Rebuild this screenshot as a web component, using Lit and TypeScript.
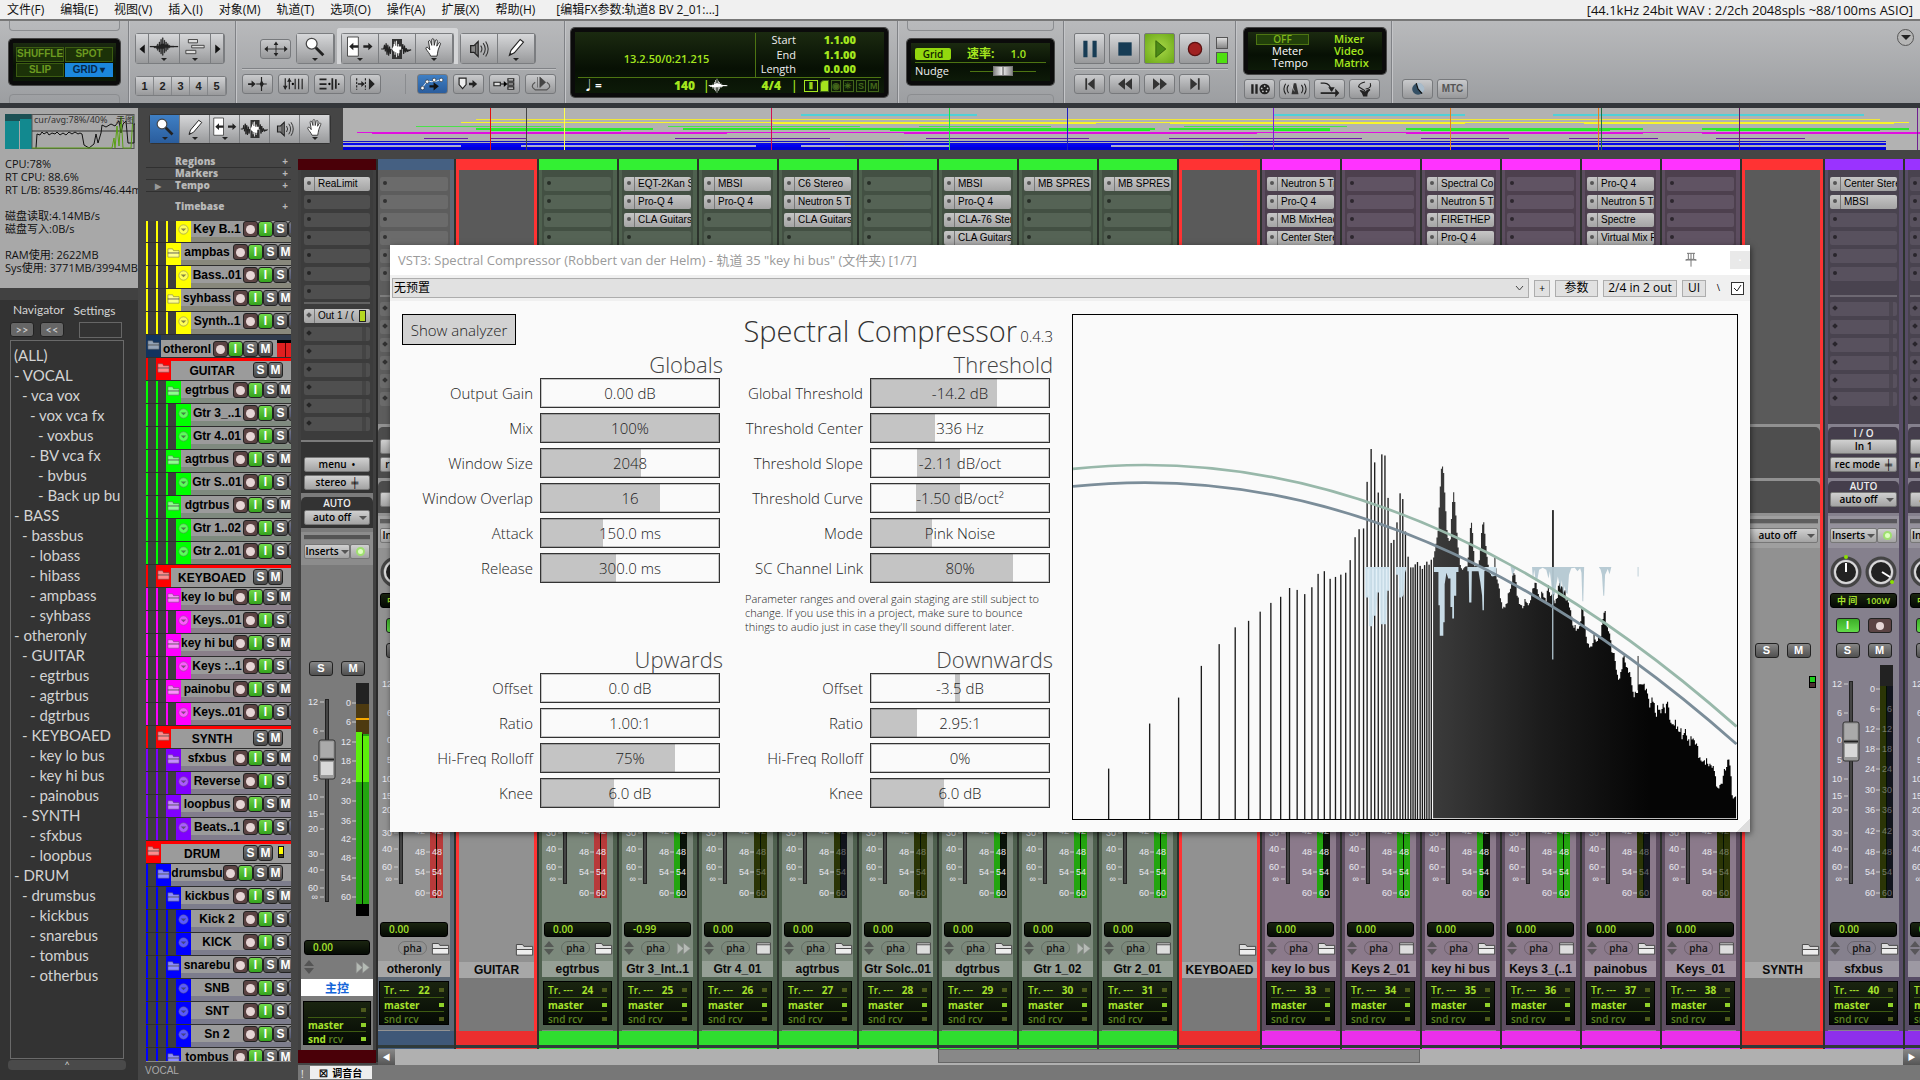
import { LitElement, html, css, svg, nothing } from "lit";
import { customElement, property } from "lit/decorators.js";
import { classMap } from "lit/directives/class-map.js";
import { styleMap } from "lit/directives/style-map.js";

/* ---------- icons ---------- */

const wavePath =
  "M0 11.500h3v-1h1v-2h1v2h1V6h1v3h1V3h1v5h1V1h1v7h1V4h1v5h1V6h1v3h1V8h1v2h2v1h5v1h-5v1h-2v2h-1v-2h-1v4h-1v-4h-1v6h-1v-5h-1v8h-1v-8h-1v6H8v-6H7v4H6v-4H5v2H4v-2H3v-1H0z";
const handPath =
  "M8 23c-1-3-4-6-5.500-8.500C1.500 12.500 3.500 11.500 5 13l2 2.500L5.500 6C5 4 7.300 3.500 7.900 5.400L9.300 10V3.500c0-2 2.500-2 2.600 0L12.300 10l1.200-5.500c.5-1.900 2.800-1.300 2.500.6L15.400 11l2-3.500c1-1.600 2.900-.6 2.300 1L17 15.500c-.7 2.500-.8 5.500-1.400 7.500z";

const icons: Record<string, unknown> = {
  zoom: svg`<circle cx="8" cy="8" r="6.500" fill="#fff" stroke="#444" stroke-width="1.500"/><path d="M13 13l9 9" stroke="#222" stroke-width="3.500"/>`,
  pencil: svg`<path d="M4 22l2-6L17 3l4 3L10 19z" fill="#fff" stroke="#222" stroke-width="1.300"/><path d="M4 22l1-3 2 1.500z" fill="#222"/>`,
  trim: svg`<path d="M-3 0h13v23H-3z" fill="#fff" stroke="#333"/><path d="M-1 11.500l5-4.500v3h6v3H4v3z" fill="#222"/><path d="M27 11.500L22 7v3h-6v3h6v3z" fill="#222"/>`,
  wave: svg`<path d="M6 0h12v24H6z" fill="#333"/><path d="M-7 12h3l1-5 1 8 1-10 1 14 1-12 1 13 1-11 1 9 1-6M18 12l1-6 1 12 1-10 1 8 1-5 1 4 5-2" fill="#222" stroke="#222" stroke-width="1.300"/><path d="M6 12l2-4V6h1V3h1v5h1V2h1v7h1V6h1v3h3v4h-2v4h-1v3h-1v-3h-1v5h-1v-6h-1v3H9v-4H8z" fill="#fff"/>`,
  waveform: svg`<path d="${wavePath}" fill="#222" stroke="#222" stroke-width=".5"/><path d="M-5 11.500h34" stroke="#222" stroke-width="1.500"/>`,
  waveLight: svg`<path d="${wavePath}" fill="#fff"/><path d="M-2 11.500h28" stroke="#fff" stroke-width="1.500"/>`,
  hand: svg`<path d="${handPath}" fill="#fff" stroke="#333" stroke-width="1.200"/>`,
  speaker: svg`<path d="M2 8h4l5-5v18l-5-5H2z" fill="#888" stroke="#222" stroke-width="1.500"/><path d="M8 6v12M14 8q3 4 0 8M17 5q5 7 0 14M20 3q6 9 0 18" fill="none" stroke="#333" stroke-width="1.300"/>`,
  tracks: svg`<path d="M4 3h11v4H4zM8 10h15v3H8zM1 16h12v4H1z" fill="#ddd" stroke="#333"/>`,
  left: svg`<path d="M18 0v24L4 12z" fill="#111"/>`,
  right: svg`<path d="M6 0v24l14-12z" fill="#111"/>`,
  move: svg`<path d="M-5 12h34M12 3v18" stroke="#222" stroke-width="1.500"/><path d="M-8 12l6-5v10zM32 12l-6-5v10zM12-1l4 6H8zM12 25l4-6H8z" fill="#222"/>`,
  nudge: svg`<path d="M-5 10.500h6V6l7 6-7 6v-4.500h-6z" fill="#222"/><path d="M18 0v24M9 12h18" stroke="#222" stroke-width="2"/><path d="M18 5l4 7-4 7-3-7z" fill="#222"/>`,
  updown: svg`<path d="M-3 2v19M4 2v19M14 3v18M26 3v18M20 3v18" stroke="#222" stroke-width="2"/><path d="M-7 15l4 7 4-7zM0 8l4-6 4 6z" fill="#222"/><circle cx="10" cy="12" r="2"/>`,
  lines: svg`<path d="M-6 4H6M-6 12H6M-6 20H6M16 2v20M22 4v16" stroke="#222" stroke-width="3"/><circle cx="11" cy="12" r="2"/><circle cx="27" cy="12" r="1.500"/>`,
  tabto: svg`<path d="M-4 2v20M11 2v20" stroke="#222" stroke-width="2" stroke-dasharray="4 2"/><path d="M-2 12h7" stroke="#222" stroke-width="2.500"/><path d="M4 7l6 5-6 5zM17 2v20l10-10z" fill="#222"/>`,
  envelope: svg`<path d="M-6 18L2 7l8 1 8-1 8-3" fill="none" stroke="#fff" stroke-width="1.500"/><path d="M6 14h7v-5l9 7-9 7v-5H6z" fill="#111"/><g fill="#fff" stroke="#222"><circle cx="-6" cy="19" r="3"/><circle cx="2" cy="8" r="3"/><circle cx="14" cy="5" r="3"/><circle cx="26" cy="5" r="3"/></g>`,
  marker: svg`<path d="M-5 2H7v11l-6 7-6-7z" fill="#eee" stroke="#222" stroke-width="2"/><path d="M12 10h6V5l8 7-8 7v-5h-6z" fill="#222"/>`,
  boxes: svg`<path d="M-7 9H4v6H-7zM17 3h10v4H17zM17 10h10v4H17zM17 17h10v4H17z" fill="#ddd" stroke="#222" stroke-width="2"/><path d="M5 12h6" stroke="#222" stroke-width="2"/><path d="M10 7l6 5-6 5z"/>`,
  loop: svg`<path d="M2 9q-10 7 0 13h20q10-6 0-13" fill="none" stroke="#555" stroke-width="2"/><path d="M6 0v18M10 0l10 9-10 9z" fill="#444" stroke="#444"/>`,
  pause: svg`<path d="M4 2h5v20H4zM15 2h5v20h-5z" fill="#173c55"/>`,
  stop: svg`<path d="M4 4h16v16H4z" fill="#173c55"/>`,
  play: svg`<path d="M7 2v20l12-10z" fill="#4c8a17" stroke="#2d5c08"/>`,
  record: svg`<circle cx="12" cy="12" r="8" fill="#a02222" stroke="#5b1212" stroke-width="1.500"/>`,
  start: svg`<path d="M4 2h3v20H4zM20 2v20L8 12z" fill="#333"/>`,
  rewind: svg`<path d="M12 2v20L0 12zM24 2v20L12 12z" fill="#333"/>`,
  forward: svg`<path d="M0 2v20l12-10zM12 2v20l12-10z" fill="#333"/>`,
  end: svg`<path d="M17 2h3v20h-3zM4 2v20l12-10z" fill="#333"/>`,
  midi: svg`<path d="M-3 4h4v16h-4zM4 4h4v16H4z" fill="#222"/><circle cx="20" cy="12" r="9" fill="#222"/><g fill="#ccc"><circle cx="15" cy="11" r="1.500"/><circle cx="20" cy="7" r="1.500"/><circle cx="25" cy="11" r="1.500"/><circle cx="17" cy="16" r="1.500"/><circle cx="23" cy="16" r="1.500"/></g>`,
  metro: svg`<path d="M10 2h4l4 19H6z" fill="#333"/><path d="M11 16L6 5" stroke="#ddd"/><path d="M1 5q-5 7 0 14M-4 3q-6 9 0 18M23 5q5 7 0 14M28 3q6 9 0 18" fill="none" stroke="#222" stroke-width="1.800"/>`,
  merge: svg`<path d="M-4 2h6q10 0 12 13" fill="none" stroke="#222" stroke-width="2"/><path d="M-4 19h27" stroke="#222" stroke-width="3"/><path d="M21 11l7 8-7 7zM9 9h11l-5 8z" fill="#222"/>`,
  wheat: svg`<path d="M9 25q-1-6-6-10c0-3 6 0 7 1h3c4-5 8-5 8-2-4 3-5 6-5 11z" fill="#222"/><path d="M12 15L1 8q1-6 11-8M13 12q11-1 8-10" fill="none" stroke="#222" stroke-width="1.800"/>`,
  clock: svg`<circle cx="12" cy="12" r="10" fill="#345065"/><path d="M12 12L9 2a10 10 0 0 1 10 17z" fill="#a9bccb"/><path d="M9 2l3 10 7 8" stroke="#111" fill="none" stroke-width="2"/>`,
  folder: svg`<path d="M-1 4h10l2 3h14v6H-1z" fill="#ddd" stroke="#444" stroke-width="1.500"/><path d="M-1 12h26v9H-1z" fill="#eee" stroke="#444" stroke-width="1.500"/>`,
  ff: svg`<path d="M2 3v18l10-9zM12 3v18l11-9z" fill="#b4bab4" stroke="#888"/>`,
  window: svg`<path d="M1 3h22v18H1z" fill="#ddd" stroke="#444" stroke-width="1.500"/><path d="M1 6h22" stroke="#444" stroke-width="1.500"/>`,
  pin: svg`<path d="M6 2h12M8 2v9h8V2M12 2v9M4 12h16M12 12v10M8 11l-4 1M16 11l4 1" fill="none" stroke="#777" stroke-width="1.500"/>`,
};

const icon = (name: string, cls = "") =>
  html`<svg class="icon ${cls}" viewBox="0 0 24 24" aria-hidden="true">${icons[name]}</svg>`;

const baseStyles = css`
  * { box-sizing: border-box; }
  button, input, select { font: inherit; color: inherit; margin: 0; padding: 0; border: 0; background: none; border-radius: 0; }
  button { display: flex; align-items: center; justify-content: center; white-space: nowrap; }
  .icon { width: 18px; height: 18px; overflow: visible; flex: none; display: block; }
  .row { display: flex; }
  .ghost { position: absolute; inset: 0; width: 100%; height: 100%; opacity: 0; }
  ul { list-style: none; margin: 0; padding: 0; }
`;

/* ---------- track list ---------- */

interface Track { name: string; level: number; color: string; tint?: string; kind: "folder" | "item" | "group"; }

const t = (name: string, level: number, color: string, tint: string, kind: Track["kind"] = "item"): Track =>
  ({ name, level, color, tint, kind });

const Y = "#ffff00", G = "#00ff00", M = "#ff00ff", P = "#8000ff", B = "#0000ff", R = "#ff0000", N = "#12335e";
const tracks: Track[] = [
  t("Key B..1", 3, Y, "#88887c"),
  t("ampbas", 2, Y, "#88887c", "folder"),
  t("Bass..01", 3, Y, "#88887c"),
  t("syhbass", 2, Y, "#88887c", "folder"),
  t("Synth..1", 3, Y, "#88887c"),
  t("otheronl", 0, N, "#999999", "folder"),
  t("GUITAR", 1, R, "#999999", "group"),
  t("egtrbus", 2, G, "#7f8a7f", "folder"),
  t("Gtr 3_..1", 3, G, "#7f8a7f"),
  t("Gtr 4..01", 3, G, "#7f8a7f"),
  t("agtrbus", 2, G, "#7f8a7f", "folder"),
  t("Gtr S..01", 3, G, "#7f8a7f"),
  t("dgtrbus", 2, G, "#7f8a7f", "folder"),
  t("Gtr 1..02", 3, G, "#7f8a7f"),
  t("Gtr 2..01", 3, G, "#7f8a7f"),
  t("KEYBOAED", 1, R, "#999999", "group"),
  t("key lo bu", 2, M, "#8a7f8a", "folder"),
  t("Keys..01", 3, M, "#8a7f8a"),
  t("key hi bu", 2, M, "#8a7f8a", "folder"),
  t("Keys :..1", 3, M, "#8a7f8a"),
  t("painobu", 2, M, "#8a7f8a", "folder"),
  t("Keys..01", 3, M, "#8a7f8a"),
  t("SYNTH", 1, R, "#999999", "group"),
  t("sfxbus", 2, P, "#827d8c", "folder"),
  t("Reverse", 3, P, "#827d8c"),
  t("loopbus", 2, P, "#827d8c", "folder"),
  t("Beats..1", 3, P, "#827d8c"),
  t("DRUM", 0, R, "#999999", "group"),
  t("drumsbu", 1, B, "#7d7d8c", "folder"),
  t("kickbus", 2, B, "#7d7d8c", "folder"),
  t("Kick 2", 3, B, "#7d7d8c"),
  t("KICK", 3, B, "#7d7d8c"),
  t("snarebu", 2, B, "#7d7d8c", "folder"),
  t("SNB", 3, B, "#7d7d8c"),
  t("SNT", 3, B, "#7d7d8c"),
  t("Sn 2", 3, B, "#7d7d8c"),
  t("tombus", 2, B, "#7d7d8c", "folder"),
];

@customElement("track-row")
class TrackRow extends LitElement {
  @property({ attribute: false }) track!: Track;
  static styles = [baseStyles, css`
    :host { display: block; height: 23px; font: 700 12px/18px "Liberation Sans", Arial, sans-serif; }
    .track { display: flex; height: 23px; align-items: stretch; border-top: 1px solid #2e2e2e; overflow: hidden; }
    .guide { flex: none; width: 10px; border-left: 2px solid; }
    .swatch { flex: none; width: 15px; display: flex; justify-content: center; padding-top: 3px; }
    .swatch svg { width: 13px; height: 13px; }
    .name { flex: none; width: 52px; text-align: center; overflow: hidden; white-space: nowrap; color: #000; background: #9b9b9b; }
    .body { display: flex; flex: 1; border-bottom: 5px solid; background: #9b9b9b; }
    .group .name { width: 82px; line-height: 21px; }
    .group .body { border-bottom: 0; border-top: 3px solid #f00; }
    .root .body { border-bottom: 0; border-top: 5px solid #2f3b4c; }
    .btn { flex: none; width: 15px; height: 16px; margin-top: 1px; border: 1px solid #222; border-radius: 3px; color: #fff; background: linear-gradient(#777, #4a4a4a); font-size: 12px; }
    .btn.arm { background: #5b4343; }
    .btn.arm::before { content: ""; width: 9px; height: 9px; border-radius: 50%; background: #e6d5d5; }
    .btn.mon { background: linear-gradient(#6fd84a, #35a31e); }
    .meter { margin: 0 0 0 4px; width: 14px; border-top: 3px solid #000; background: linear-gradient(90deg, #e02020 8px, #500 8px 9px, #e02020 9px); }
    .level { margin: 2px 0 0 5px; width: 6px; height: 12px; border: 1px solid #111; background: linear-gradient(#ffff00 7px, #222 7px 8px, #443c10 8px); }
  `];
  render() {
    const k = this.track;
    const group = k.kind === "group";
    const root = k.level === 0 && !group;
    const guide = k.level === 1 && k.color !== B ? R : k.color;
    return html`<div class=${classMap({ track: true, group, root })}>
      ${Array.from({ length: k.level }, () => html`<span class="guide" style=${styleMap({ borderColor: guide })}></span>`)}
      <span class="swatch" style=${styleMap({ background: k.color })}>
        <svg viewBox="0 0 14 14" aria-hidden="true">${k.kind === "item"
          ? svg`<circle cx="7" cy="7" r="5" fill="#fff" fill-opacity=".35" stroke="#666" stroke-opacity=".5"/><path d="M4 6h6l-3 3z" fill="#333" fill-opacity=".6"/>`
          : svg`<path d="M1 3h5l1 2h6v3H1zM1 7h12v5H1z" fill="#fff" fill-opacity=".55" stroke="#555" stroke-opacity=".5"/>`}</svg>
      </span>
      <div class="body" style=${styleMap(group || root ? {} : { borderColor: k.tint! })}>
        <span class="name">${k.name}</span>
        ${group ? nothing : html`<button class="btn arm" aria-label="Record arm"></button><button class="btn mon">I</button>`}
        <button class="btn">S</button><button class="btn">M</button>
        ${root ? html`<span class="meter"></span>` : nothing}
        ${group && k.level === 0 ? html`<span class="level"></span>` : nothing}
      </div>
    </div>`;
  }
}

/* ---------- mixer ---------- */

interface Strip {
  name: string; num?: number; theme: string; kind: "track" | "folder" | "plain";
  fx?: string[]; vol?: string; meter?: string; foot?: string;
}
const s = (name: string, num: number, theme: string, foot: string, meter: string, fx: string[] = [], vol = "0.00"): Strip =>
  ({ name, num, theme, foot, meter, fx, vol, kind: "track" });
const f = (name: string): Strip => ({ name, theme: "red", kind: "folder" });

const strips: Strip[] = [
  { ...s("otheronly", 22, "steel", "folder", "red"), kind: "plain" },
  f("GUITAR"),
  s("egtrbus", 24, "green", "folder", "red"),
  s("Gtr 3_Int..1", 25, "green", "ff", "half", ["EQT-2Kan S", "Pro-Q 4", "CLA Guitars"], "-0.99"),
  s("Gtr 4_01", 26, "green", "window", "idle", ["MBSI", "Pro-Q 4"]),
  s("agtrbus", 27, "green", "folder", "idlehalf", ["C6 Stereo", "Neutron 5 Tr", "CLA Guitars"]),
  s("Gtr Solc..01", 28, "green", "window", "idle"),
  s("dgtrbus", 29, "green", "folder", "half", ["MBSI", "Pro-Q 4", "CLA-76 Ster", "CLA Guitars"]),
  s("Gtr 1_02", 30, "green", "ff", "full", ["MB SPRES"]),
  s("Gtr 2_01", 31, "green", "window", "full", ["MB SPRES"]),
  f("KEYBOAED"),
  s("key lo bus", 33, "magenta", "folder", "half", ["Neutron 5 Tr", "Pro-Q 4", "MB MixHead", "Center Stere"]),
  s("Keys 2_01", 34, "magenta", "window", "full"),
  s("key hi bus", 35, "magenta", "folder", "half", ["Spectral Co", "Neutron 5 Tr", "FIRETHEP", "Pro-Q 4"]),
  s("Keys 3_(..1", 36, "magenta", "window", "full"),
  s("painobus", 37, "magenta", "folder", "idlehalf", ["Pro-Q 4", "Neutron 5 Tr", "Spectre", "Virtual Mix R"]),
  s("Keys_01", 38, "magenta", "window", "idle"),
  f("SYNTH"),
  s("sfxbus", 40, "violet", "folder", "idlehalf", ["Center Stere", "MBSI"]),
  s("Reverse", 41, "violet", "window", "idle"),
];

type Marks = readonly (readonly [string, number])[];
const channelScale: Marks = [["12", 22], ["6", 51], ["0", 78], ["5", 98], ["10", 117], ["15", 134], ["20", 148], ["30", 171], ["40", 187], ["60", 205], ["∞", 217]];
const channelDb: Marks = [["0", 27], ["6", 47], ["12", 67], ["18", 87], ["24", 107], ["30", 128], ["36", 148], ["42", 169], ["48", 190], ["54", 210], ["60", 231]];
const masterScale: Marks = [["12", 22], ["6", 51], ["0", 78], ["5", 98], ["10", 117], ["15", 134], ["20", 149], ["30", 174], ["40", 190], ["60", 208], ["∞", 217]];
const masterDb: Marks = [["0", 23], ["6", 42], ["12", 62], ["18", 81], ["24", 101], ["30", 121], ["36", 141], ["42", 159], ["48", 178], ["54", 198], ["60", 217]];

const mixStyles = css`
  .band { height: 11px; background: var(--hue); flex: none; }
  .slots { display: flex; flex-direction: column; gap: 4px; }
  .slot { height: 14px; border-radius: 2px; background: var(--slot); display: flex; align-items: center; justify-content: flex-start; font: 10px/14px "Liberation Sans", Arial, sans-serif; color: #000; overflow: hidden; }
  .slot::before { content: ""; flex: none; width: 4px; height: 4px; margin: 0 3px 3px 3px; border-radius: 50%; background: #0008; }
  .slot.on { background: linear-gradient(#c6c6c6, #a4a4a4); }
  .slot.on span { border-left: 1px solid #777; padding-left: 3px; }
  .slot.send::before { border-radius: 0; transform: rotate(45deg); }
  .slot.send::after { content: ""; width: 4px; height: 14px; margin: 0 4px 0 auto; background: #0002; }
  .slot.send.on::after { width: 5px; height: 10px; border: 1px solid #222; background: #b6d820; }
  .chip { width: 100%; height: 15px; border: 1px solid #777; border-radius: 2px; background: linear-gradient(#d0d0d0, #a3a3a3); color: #000; font: 600 10px/13px "Open Sans", sans-serif; }
  .chip i { margin-left: auto; border: 4px solid transparent; border-top-color: #555; border-bottom: 0; margin-right: 2px; }
  .chip.drop span { margin-left: auto; }
  .caption { text-align: center; color: #eee; font: 600 10px/12px "Open Sans", sans-serif; }
  .panel { background: var(--dark); border-radius: 5px 5px 0 0; }
  .ins { background: #fff2; }
  .insbar { height: 5px; background: #0006; margin-bottom: 4px; border-bottom: 1px solid #fff4; }
  .inschip { display: flex; }
  .inschip .chip:first-child { flex: 1; gap: 2px; }
  .inschip .chip:last-child { width: 20px; }
  .inschip .chip:first-child i { margin: 0; }
  .lamp { width: 9px; height: 9px; border-radius: 50%; border: 2px solid #9fe070; background: #dfffc0; }
  .pair { display: flex; justify-content: center; gap: 8px; }
  .key { width: 24px; height: 15px; border: 1px solid #222; border-radius: 3px; background: linear-gradient(#868686, #505050); color: #fff; font: 700 11px/13px "Liberation Sans", Arial, sans-serif; }
  .key.green { background: linear-gradient(#3cae28, #62dc49); }
  .key.rec { background: #5b4343; }
  .key.rec::before { content: ""; width: 8px; height: 8px; border-radius: 50%; background: #e6d5d5; }
  .fader { position: relative; height: 240px; width: 70px; }
  .fader svg { display: block; width: 70px; height: 240px; }
  .fader text { font: 9px "Liberation Sans", Arial, sans-serif; fill: #e8e8f0; text-anchor: end; }
  .lcd { background: linear-gradient(#1a2410, #050a04); border: 1px solid #000; border-radius: 3px; color: #a6e22c; font: 600 10px/13px "Open Sans", sans-serif; }
  .vol { height: 15px; padding: 0 8px; text-align: left; }
  .feet { display: flex; height: 18px; align-items: center; justify-content: flex-end; gap: 6px; }
  .feet .icon { width: 15px; height: 15px; }
  .updown { width: 10px; height: 14px; margin-right: auto; }
  .phase { width: 29px; height: 14px; border: 1px solid #0003; border-radius: 7px; color: #111; font: 600 10px/12px "Open Sans", sans-serif; }
  .route { height: 44px; padding: 1px 4px; border-radius: 0; font-size: 10px; line-height: 14px; }
  .route div { display: flex; justify-content: space-between; align-items: center; height: 14px; white-space: nowrap; }
  .route div + div { border-top: 1px solid #3e5b12; }
  .route b { font-weight: 700; }
  .route u { width: 5px; height: 4px; background: #4d5a1c; }
  .route u.lit { background: #8fd12a; }
  .route .dim { color: #5d8522; }
`;

const faderView = (left: Marks, right: Marks, meter: string, master = false) => {
  const fills: Record<string, string[]> = {
    red: ["#b83a3a", "#b83a3a"], half: ["#23a50f", "#0a120a"], full: ["#23a50f", "#23a50f"],
    idle: ["#2b3506", "#2b3506"], idlehalf: ["#2b3506", "#11141c"],
  };
  const [a, b] = fills[meter] ?? fills.full;
  return html`<div class="fader"><svg viewBox="0 0 70 240" aria-hidden="true">
    ${left.map(([v, y]) => svg`<text x="13" y=${y + 3}>${v}</text><path d="M15 ${y}h4" stroke="#ccc" stroke-width="1"/>`)}
    <rect x="20" y="19" width="4" height="203" fill="#222"/><path d="M22 20v201" stroke="#666"/>
    <rect x="51" y="3" width="13" height="21" fill="#222"/>
    <rect x="51" y="24" width="6" height="212" fill=${a}/><rect x="58" y="24" width="6" height="212" fill=${b}/>
    <path d="M57.500 24V236" stroke="#031003"/>
    ${master ? svg`<rect x="51" y="24" width="13" height="30" fill="#4d3a10"/><path d="M51 39h13" stroke="#f5a800" stroke-width="2"/><rect x="51" y="52" width="6" height="50" fill="#5cf00a"/><rect x="58" y="56" width="6" height="46" fill="#5cf00a"/><rect x="51" y="224" width="13" height="12" fill="#000"/>` : nothing}
    ${right.map(([v, y]) => svg`<text x="46" y=${y + 3}>${v}</text><path d="M47 ${y}h4" stroke="#ccc"/>`)}
    ${master ? nothing : right.slice(1).map(([v, y]) => svg`<text x="63" y=${y + 3} fill-opacity=${meter.startsWith("idle") ? 0.4 : 1}>${v}</text>`)}
    <g><rect x="14" y="60" width="16" height="39" rx="2" fill="#9a9a9a" stroke="#333"/><rect x="16" y="62" width="12" height="15" fill="#aaa"/><rect x="16" y="82" width="12" height="13" fill="#d8d8d8"/><path d="M15 79.500h14" stroke="#222" stroke-width="2"/></g>
  </svg><input class="ghost" type="range" aria-label="Volume"></div>`;
};

const upDown = svg`<path d="M5 0l5 6H0zM5 14l5-6H0z" fill="#444" fill-opacity=".7"/>`;

@customElement("channel-strip")
class ChannelStrip extends LitElement {
  @property({ attribute: false }) strip!: Strip;
  static styles = [baseStyles, mixStyles, css`
    :host { display: block; flex: none; width: 80px; }
    .strip { height: 100%; display: flex; flex-direction: column; border-right: 2px solid #2c322c; background: var(--edge); }
    .green { --hue: #33f033; --dark: #465446; --slot: #556355; --low: #7c897c; --edge: #4f614f; --fxbg: #435043; }
    .magenta { --hue: #ff33ff; --dark: #4f4250; --slot: #605363; --low: #8b7a8b; --edge: #5d4d60; --fxbg: #4d404e; }
    .violet { --hue: #9a33ff; --dark: #453e4c; --slot: #58515e; --low: #85808d; --edge: #574c66; --fxbg: #49434f; }
    .steel { --hue: #456082; --dark: #4c4c4c; --slot: #6b6b6b; --low: #929292; --edge: #5d6875; --fxbg: #5d5d5d; }
    .red { --hue: #ff3333; --dark: #4e4e4e; --slot: #5a5a5a; --low: #919191; --edge: #ff3333; --fxbg: #5a5a5a; }
    .core { display: flex; flex-direction: column; margin: 0 4px 0 3px; background: var(--low); flex: 1; }
    .plain .core { margin: 0 4px 0 0; }
    .folder .core { margin: 0 3px; }
    .fxs { background: var(--fxbg); padding: 7px 2px 0; height: 254px; }
    .fxs .split { border-top: 2px solid #fff3; margin: 14px 0 5px; }
    .io { margin-top: 3px; height: 51px; padding: 0 2px; }
    .io .chip { margin-bottom: 3px; }
    .auto { margin-top: 3px; height: 32px; padding: 0 2px; }
    .auto .caption { line-height: 11px; }
    .ins { margin-top: 3px; height: 32px; padding: 3px 2px 0; }
    .knobs { display: flex; justify-content: space-around; margin-top: 6px; height: 36px; }
    .knobs svg { width: 32px; height: 34px; }
    .pan { display: flex; justify-content: space-between; margin: 3px 2px 0; padding: 0 6px; height: 15px; font-family: "Open Sans", "Noto Sans CJK SC", sans-serif; font-size: 9px; }
    .mid { margin-top: 10px; height: 15px; }
    .sm { margin-top: 10px; }
    .fader { margin: 4px 0 0 1px; }
    .vol { margin: 20px 2px 0; }
    .feet { padding: 0 2px; margin: 2px 0 4px; }
    .name { height: 16px; text-align: center; background: #fff3; color: #0a0a0a; font: 700 12px/16px "Liberation Sans", Arial, sans-serif; overflow: hidden; white-space: nowrap; }
    .under { background: var(--edge); padding: 4px 1px 0; height: 53px; }
    .folder .under { background: #797979; }
    .leds { margin: 18px 4px 0 auto; width: 7px; height: 12px; border: 1px solid #000; background: linear-gradient(#1dd01d 5px, #000 5px 6px, #4a3030 6px); }
    .gap { flex: 1; }
    .foot { height: 14px; background: var(--hue); filter: brightness(0.92); flex: none; }
    .tail { height: 4px; background: #2f3a3a; border-bottom: 1px solid var(--hue); flex: none; }
  `];
  render() {
    const c = this.strip;
    const folder = c.kind === "folder";
    return html`<div class=${classMap({ strip: true, [c.theme]: true, [c.kind]: true })}>
      <div class="band"></div>
      <div class="core">
        <div class="fxs">${folder ? nothing : html`
          <div class="slots">${Array.from({ length: 6 }, (_, i) => c.fx?.[i]
            ? html`<button class="slot on"><span>${c.fx[i]}</span></button>`
            : html`<button class="slot" aria-label="Empty insert"></button>`)}</div>
          <div class="split"></div>
          <div class="slots">${Array.from({ length: 6 }, () => html`<button class="slot send" aria-label="Empty send"></button>`)}</div>`}
        </div>
        <div class="panel io">${folder ? nothing : html`<div class="caption">I / O</div>
          <button class="chip">In 1</button><button class="chip">rec mode&ensp;╪</button>`}</div>
        <div class="panel auto">${folder ? nothing : html`<div class="caption">AUTO</div>
          <button class="chip drop"><span>auto off</span><i></i></button>`}</div>
        <div class="ins"><div class="insbar"></div>${folder
          ? html`<button class="chip drop"><span>auto off</span><i></i></button>`
          : html`<div class="inschip"><button class="chip">Inserts<i></i></button><button class="chip" aria-label="Bypass"><span class="lamp"></span></button></div>`}</div>
        ${folder ? html`<div class="knobs"></div><div class="pan"></div><div class="mid"></div>` : html`
          <div class="knobs">${[0, 1].map((i) => html`<svg viewBox="0 0 32 34" aria-hidden="true">
            <circle cx="16" cy="18" r="14" fill="none" stroke="#444" stroke-width="3"/><circle cx="16" cy="18" r="11" fill="#222" stroke="#d8d8d8" stroke-width="2"/>
            <path d=${i ? "M17 18l8 5" : "M16 18V9"} stroke="#fff" stroke-width="2"/><circle cx=${i ? 27 : 16} cy=${i ? 28 : 3} r="2" fill="#8be000"/></svg>`)}</div>
          <div class="pan lcd"><span>中 间</span><span>100W</span></div>
          <div class="mid pair"><button class="key green">I</button><button class="key rec" aria-label="Record arm"></button></div>`}
        <div class="sm pair"><button class="key">S</button><button class="key">M</button></div>
        ${folder ? html`<div class="leds"></div><div class="gap"></div>` : html`
          ${faderView(channelScale, channelDb, c.meter ?? "idle")}
          <div class="vol lcd">${c.vol}</div>`}
        <div class="feet">
          ${c.kind === "track" ? html`<svg class="updown" viewBox="0 0 10 14" aria-hidden="true">${upDown}</svg>` : nothing}
          ${folder ? nothing : html`<button class="phase">pha</button>`}
          ${icon(folder ? "folder" : c.foot!)}
        </div>
        <div class="name">${c.name}</div>
        <div class="under">${folder ? nothing : html`<div class="route lcd">
          <div><span>Tr. ---</span><b>${c.num}</b><u></u></div>
          <div><b>master</b><u class="lit"></u></div>
          <div class="dim"><span>snd rcv</span><u></u></div></div>`}</div>
      </div>
      <div class="foot"></div><div class="tail"></div>
    </div>`;
  }
}

@customElement("master-strip")
class MasterStrip extends LitElement {
  static styles = [baseStyles, mixStyles, css`
    :host { display: block; flex: none; width: 80px; }
    .strip { --hue: #4a0008; --dark: #343434; --slot: #4f4f4f; display: flex; flex-direction: column; height: 100%; background: #404040; border-right: 2px solid #2a2a2a; }
    .core { display: flex; flex-direction: column; margin: 0 3px; background: #7b7b7b; flex: 1; }
    .fxs { background: #3c3c3c; padding: 7px 3px 0; height: 270px; }
    .split { border-top: 2px solid #fff3; margin: 3px 0 5px; }
    .cfg { background: #333; margin-top: 2px; height: 51px; padding: 15px 3px 0; }
    .cfg .chip { margin-bottom: 3px; }
    .auto { margin-top: 4px; height: 31px; padding: 0 3px; background: #333; }
    .auto .caption { line-height: 13px; }
    .ins { margin-top: 4px; height: 33px; padding: 3px 3px 0; }
    .sm { margin-top: 96px; }
    .fader { margin: 4px 0 0 4px; }
    .vol { margin: 20px 3px 0; }
    .feet { padding: 0 3px; margin: 3px 0; }
    .name { height: 17px; background: #fff; color: #1565d8; text-align: center; font: 700 12px/17px "Noto Sans CJK SC", sans-serif; }
    .route { margin: 5px 2px 5px; }
    .route div:first-child { justify-content: flex-end; }
    .foot { height: 13px; background: #4a0008; flex: none; }
  `];
  render() {
    return html`<div class="strip">
      <div class="band"></div>
      <div class="core">
        <div class="fxs">
          <div class="slots"><button class="slot on"><span>ReaLimit</span></button>
            ${Array.from({ length: 6 }, () => html`<button class="slot" aria-label="Empty insert"></button>`)}</div>
          <div class="split"></div>
          <div class="slots"><button class="slot send on"><span>Out 1 / (</span></button>
            ${Array.from({ length: 6 }, () => html`<button class="slot send" aria-label="Empty output"></button>`)}</div>
        </div>
        <div class="cfg"><button class="chip">menu&ensp;•</button><button class="chip">stereo&ensp;╪</button></div>
        <div class="panel auto"><div class="caption">AUTO</div><button class="chip drop"><span>auto off</span><i></i></button></div>
        <div class="ins"><div class="insbar"></div><div class="inschip"><button class="chip">Inserts<i></i></button><button class="chip" aria-label="Bypass"><span class="lamp"></span></button></div></div>
        <div class="sm pair"><button class="key">S</button><button class="key">M</button></div>
        ${faderView(masterScale, masterDb, "full", true)}
        <div class="vol lcd">0.00</div>
        <div class="feet"><svg class="updown" viewBox="0 0 10 14" aria-hidden="true">${upDown}</svg>${icon("ff")}</div>
        <div class="name">主控</div>
        <div class="route lcd"><div><u></u></div><div><b>master</b><u class="lit"></u></div><div><span><b>snd</b> <span class="dim">rcv</span></span><u class="lit"></u></div></div>
      </div>
      <div class="foot"></div>
    </div>`;
  }
}

/* ---------- plugin window ---------- */

type Param = [label: string, value: string, from: number, to: number];
const globals: Param[] = [["Output Gain", "0.00 dB", 0, 0], ["Mix", "100%", 0, 100], ["Window Size", "2048", 0, 56], ["Window Overlap", "16", 0, 67], ["Attack", "150.0 ms", 0, 35], ["Release", "300.0 ms", 0, 42]];
const threshold: Param[] = [["Global Threshold", "-14.2 dB", 0, 71], ["Threshold Center", "336 Hz", 0, 36], ["Threshold Slope", "-2.11 dB/oct", 26, 50], ["Threshold Curve", "-1.50 dB/oct²", 25, 50], ["Mode", "Pink Noise", 0, 34], ["SC Channel Link", "80%", 0, 80]];
const upwards: Param[] = [["Offset", "0.0 dB", 0, 0], ["Ratio", "1.00:1", 0, 0], ["Hi-Freq Rolloff", "75%", 0, 75], ["Knee", "6.0 dB", 0, 41]];
const downwards: Param[] = [["Offset", "-3.5 dB", 47, 50], ["Ratio", "2.95:1", 0, 26], ["Hi-Freq Rolloff", "0%", 0, 0], ["Knee", "6.0 dB", 0, 41]];

const thinBars = [[108, 1383], [200, 1265], [265, 1197], [316, 1114], [356, 1057], [392, 1013], [422, 996], [448, 972], [472, 949], [494, 933], [514, 910], [531, 915], [548, 926], [564, 908], [578, 873], [592, 866], [605, 886], [617, 881], [629, 875], [640, 870], [650, 837], [661, 777], [670, 756], [680, 754], [688, 632], [697, 546], [705, 581], [713, 660], [721, 560], [728, 563], [735, 674], [742, 792], [748, 784], [755, 738], [762, 662], [768, 677], [774, 762], [780, 828], [786, 856], [791, 856], [796, 848], [801, 842], [807, 852], [812, 860], [817, 850], [822, 841], [827, 849], [832, 836]];
const envelope = [[836, 830], [840, 800], [846, 760], [850, 660], [854, 589], [858, 600], [862, 680], [866, 760], [870, 790], [874, 780], [877, 700], [881, 657], [885, 700], [890, 790], [895, 850], [900, 865], [912, 850], [916, 790], [920, 728], [924, 770], [928, 850], [935, 855], [940, 830], [944, 760], [948, 729], [952, 780], [957, 840], [962, 870], [967, 880], [972, 860], [974, 820], [977, 880], [982, 915], [988, 945], [995, 963], [1002, 938], [1008, 925], [1014, 880], [1018, 885], [1024, 925], [1032, 955], [1040, 950], [1048, 965], [1054, 950], [1060, 900], [1066, 890], [1072, 920], [1080, 935], [1088, 950], [1094, 910], [1102, 925], [1110, 940], [1118, 910], [1126, 915], [1134, 930], [1140, 940], [1146, 985], [1152, 1015], [1160, 1030], [1166, 1000], [1172, 950], [1176, 1010], [1182, 1050], [1190, 1070], [1196, 1045], [1202, 1055], [1210, 1030], [1216, 990], [1220, 950], [1224, 1000], [1230, 1040], [1236, 1080], [1244, 1115], [1252, 1135], [1258, 1110], [1262, 1085], [1268, 1120], [1276, 1150], [1284, 1175], [1294, 1165], [1299, 1160], [1308, 1180], [1314, 1195], [1322, 1200], [1328, 1185], [1334, 1230], [1344, 1245], [1354, 1225], [1360, 1195], [1366, 1235], [1376, 1270], [1388, 1300], [1400, 1275], [1412, 1305], [1426, 1335], [1440, 1350], [1450, 1375], [1460, 1385], [1470, 1405], [1480, 1420], [1490, 1405], [1497, 1355], [1502, 1410], [1507, 1445], [1514, 1450]];
const reduction = [
  [[684, 855], [684, 935], [692, 935], [692, 1010], [700, 1010], [703, 983], [708, 983], [711, 922], [716, 922], [718, 1005], [731, 1005], [733, 917], [738, 917], [738, 855]],
  [[753, 855], [753, 875], [759, 875], [760, 935], [766, 935], [770, 928], [773, 870], [777, 855]],
  [[838, 855], [838, 868], [848, 868], [848, 955], [851, 955], [851, 1035], [859, 1035], [859, 1000], [862, 1000], [862, 900], [866, 870], [870, 885], [875, 885], [875, 960], [879, 960], [879, 990], [883, 990], [883, 930], [888, 930], [888, 868], [893, 868], [893, 855]],
  [[913, 855], [913, 866], [916, 866], [917, 948], [922, 948], [923, 866], [938, 866], [942, 895], [946, 930], [947, 968], [950, 968], [951, 866], [956, 862], [962, 866], [968, 880], [978, 878], [978, 855]],
  [[1010, 855], [1014, 878], [1018, 866], [1022, 858], [1026, 855]],
  [[1058, 855], [1060, 888], [1063, 862], [1066, 890], [1070, 888], [1074, 862], [1082, 857], [1090, 862], [1095, 885], [1098, 866], [1101, 895], [1103, 925], [1103, 1097], [1106, 1097], [1106, 925], [1109, 930], [1112, 905], [1116, 880], [1122, 915], [1125, 890], [1128, 932], [1131, 905], [1134, 922], [1138, 926], [1141, 875], [1146, 858], [1154, 857], [1160, 866], [1166, 858], [1169, 870], [1171, 945], [1173, 945], [1175, 855]],
  [[1208, 855], [1212, 862], [1215, 875], [1218, 930], [1220, 930], [1222, 875], [1228, 860], [1232, 874], [1236, 855]],
  [[1295, 855], [1295, 880], [1297, 880], [1297, 855]],
];

function spectrumPath(): string {
  let d = "M836 1513";
  let k = 0;
  let n = 0;
  for (let x = 836; x < 1514; x += 2.5) {
    while (k < envelope.length - 2 && envelope[k + 1][0] < x) k++;
    const [x0, y0] = envelope[k];
    const [x1, y1] = envelope[k + 1];
    const base = y0 + ((y1 - y0) * (x - x0)) / (x1 - x0);
    const rough = x < 980 ? 3 : x < 1230 ? 14 : 24;
    const noise = (Math.sin(n * 12.9898) * 43758.5453) % 1;
    d += `V${Math.round(base + noise * rough)}H${Math.round((x + 2.5) * 10) / 10}`;
    n++;
  }
  return d + "V1513Z";
}

@customElement("compressor-window")
class CompressorWindow extends LitElement {
  static styles = [baseStyles, css`
    :host { display: block; background: #fafafa; box-shadow: 1px 2px 6px #0008; font-family: "Open Sans", "Noto Sans CJK SC", sans-serif; color: #222; }
    .title { display: flex; align-items: center; height: 30px; padding-left: 8px; background: #fff; color: #9a9a9a; font-size: 13px; line-height: 16px; }
    .title .icon { margin-left: auto; width: 16px; height: 16px; }
    .close { width: 20px; height: 18px; margin-left: 31px; background: #e9e9e9; color: #fff; }
    .tools { display: flex; align-items: center; height: 26px; padding: 0 6px 0 2px; background: #f0f0f0; font-size: 12px; gap: 5px; color: #000; }
    .preset { flex: 1; height: 20px; border: 1px solid #adadad; background: #e1e1e1; padding-left: 1px; appearance: none; }
    .combo { position: relative; display: flex; flex: 1; }
    .combo svg { position: absolute; right: 5px; top: 6px; width: 9px; height: 8px; }
    .tools button { height: 17px; border: 1px solid #adadad; background: #e1e1e1; }
    .plus { width: 16px; font-size: 10px; } .pars { width: 43px; } .io { width: 74px; } .ui { width: 24px; }
    .wet { width: 15px; text-align: center; font-size: 9px; }
    .tick { appearance: none; width: 13px; height: 13px; border: 1px solid #333; background: #fff; }
    .check { position: relative; display: flex; }
    .check svg { position: absolute; inset: 2px; width: 9px; height: 9px; pointer-events: none; }
    .body { display: grid; grid-template: minmax(0, 1fr) / 320px 330px minmax(0, 1fr); padding: 13px 12px 12px 12px; font-weight: 300; font-size: 15px; height: 531px; }
    .show { width: 114px; height: 31px; border: 1px solid #000; background: #d2d2d2; font-weight: 300; }
    .head { height: 36px; display: flex; }
    .brand { margin: 0; font-size: 29px; line-height: 34px; font-weight: 300; white-space: nowrap; color: #333; }
    .second .head { align-items: baseline; justify-content: flex-end; margin-right: -3px; gap: 3px; }
    h2 { margin: 0 -3px 0 0; text-align: right; font-size: 22px; line-height: 28px; font-weight: 300; color: #444; }
    .first, .second { display: flex; flex-direction: column; padding-right: 2px; }
    .params { display: flex; flex-direction: column; gap: 5px; }
    .param { display: flex; justify-content: flex-end; align-items: center; gap: 7px; height: 30px; white-space: nowrap; }
    .box { position: relative; width: 180px; height: 30px; border: 1px solid #333; outline: 1px solid #3334; outline-offset: -2px; display: grid; }
    .fill { grid-area: 1 / 1; background: #c4c4c4; }
    output { grid-area: 1 / 1; text-align: center; line-height: 28px; z-index: 1; }
    .note { height: 62px; padding: 9px 0 0 23px; margin: 0; font-size: 11px; line-height: 14px; white-space: nowrap; }
    .graph { margin-left: 20px; border: 1px solid #000; min-width: 0; min-height: 0; }
    .graph svg { display: block; width: 100%; height: 100%; }
    .grip { position: absolute; right: 0; bottom: 0; width: 14px; height: 14px; background: linear-gradient(135deg, transparent 50%, #ddd 50%); }
  `];
  group(title: string, params: Param[]) {
    return html`<h2>${title}</h2><div class="params">${params.map(([label, value, from, to]) => {
      const id = `${title}-${label}`.replace(/\W/g, "");
      return html`<div class="param"><label for=${id}>${label}</label><div class="box">
        <div class="fill" style=${styleMap({ marginLeft: `${from}%`, width: `${to - from}%` })}></div>
        <output>${value}</output><input class="ghost" id=${id} type="range" .value=${String(to)}></div></div>`;
    })}</div>`;
  }
  render() {
    const pts = (p: number[][]) => p.map((q) => q.join(",")).join(" ");
    return html`
      <div class="title"><span>VST3: Spectral Compressor (Robbert van der Helm) - 轨道 35 "key hi bus" (文件夹) [1/7]</span>${icon("pin")}<button class="close" aria-label="Close">·</button></div>
      <div class="tools">
        <div class="combo"><select class="preset" aria-label="Preset"><option>无预置</option></select>
          <svg viewBox="0 0 9 8" aria-hidden="true"><path d="M1 2l3.500 4L8 2" fill="none" stroke="#444"/></svg></div>
        <button class="plus">+</button><button class="pars">参数</button><button class="io">2/4 in 2 out</button><button class="ui">UI</button>
        <span class="wet">\\</span>
        <div class="check"><input class="tick" type="checkbox" checked aria-label="Enabled"><svg viewBox="0 0 9 9" aria-hidden="true"><path d="M1 4l3 3 4-6" fill="none" stroke="#222"/></svg></div>
      </div>
      <div class="body">
        <div class="first"><div class="head"><button class="show">Show analyzer</button></div>
          ${this.group("Globals", globals)}<div class="note"></div>${this.group("Upwards", upwards)}</div>
        <div class="second"><div class="head"><h1 class="brand">Spectral Compressor</h1><span>0.4.3</span></div>
          ${this.group("Threshold", threshold)}
          <p class="note">Parameter ranges and overal gain staging are still subject to<br>change. If you use this in a project, make sure to bounce<br>things to audio just in case they'll sound different later.</p>
          ${this.group("Downwards", downwards)}</div>
        <div class="graph"><svg viewBox="28 195 1490 1320" preserveAspectRatio="none" role="img" aria-label="Spectrum">
          <defs><linearGradient id="ink" gradientUnits="userSpaceOnUse" x1="836" y1="0" x2="1320" y2="0"><stop offset="0" stop-color="#3b3b3b"/><stop offset=".5" stop-color="#1c1c1c"/><stop offset="1" stop-color="#050505"/></linearGradient></defs>
          ${thinBars.map(([x, y]) => svg`<rect x=${x - 1.5} y=${y} width="3" height=${1515 - y} fill="#1c1c1c"/>`)}
          <path d=${spectrumPath()} fill="url(#ink)"/>
          <rect x="1103" y="706" width="4" height="240" fill="#222"/><rect x="1295" y="1088" width="2" height="90" fill="#111"/>
          ${reduction.map((p, i) => svg`<polygon points=${pts(p)} fill=${i > 3 ? "#b4c8d2" : "#cfe4ef"} fill-opacity=".95"/>`)}
          <path d="M690 860V930M701 860V980M709 860V920M717 860V1000M724 860V1000M732 860V915" stroke="#f2f8fb" stroke-width="1.500"/>
          <path d="M28 598Q772.500 504.400 1517 1273" fill="none" stroke="#98b8aa" stroke-width="7"/>
          <path d="M28 644Q772.500 550.400 1517 1319" fill="none" stroke="#7b8d99" stroke-width="7"/>
        </svg></div>
      </div>
      <div class="grip"></div>`;
  }
}

/* ---------- page ---------- */

const overview: [string, number, number, number[][]][] = [
  ["#4fd0d8", 6, 2, [[800, 976], [1273, 1465], [1553, 1864]]],
  ["#f0e63a", 11, 1, [[475, 1880]]],
  ["#f7f52a", 14, 1, [[460, 1909]]],
  ["#f7f52a", 14, 2, [[772, 1095], [1170, 1465], [1584, 1894]]],
  ["#4be04b", 18, 1, [[415, 560], [667, 859], [918, 1050], [1184, 1347]]],
  ["#2ee62e", 20, 2, [[475, 652], [682, 1155], [1169, 1330], [1406, 1643], [1702, 1909]]],
  ["#1ef01e", 22, 1, [[490, 620], [889, 1150], [1274, 1330], [1421, 1610], [1716, 1880]]],
  ["#e010e0", 24, 1, [[356, 1920]]],
  ["#e010e0", 24, 2, [[371, 726], [903, 1257], [1406, 1643], [1702, 1920]]],
  ["#6a1aa8", 30, 1, [[423, 467], [490, 526], [674, 829], [925, 1088], [1169, 1362], [1421, 1509], [1569, 1658], [1716, 1805]]],
  ["#1010c8", 33, 1, [[342, 1886]]],
  ["#0808e8", 35, 2, [[342, 1886]]],
  ["#a8a8f0", 37, 1, [[342, 460], [520, 755], [800, 844], [903, 948], [1110, 1243], [1480, 1539], [1761, 1820]]],
  ["#0000f0", 37, 2, [[460, 520], [948, 1110], [755, 800]]],
  ["#0000d8", 39, 3, [[342, 1886]]],
];
const cursors: [number, string][] = [[489, "#e01010"], [525, "#444"], [563, "#ffff4a"], [770, "#d01050"], [948, "#20e040"], [1066, "#2020c0"], [1273, "#7a20d8"], [1450, "#e08020"], [1598, "#e08020"], [1601, "#207040"], [1739, "#602060"], [1917, "#702090"]];

const outline: [number, string][] = [[0, "(ALL)"], [0, "- VOCAL"], [1, "- vca vox"], [2, "- vox vca fx"], [3, "- voxbus"], [2, "- BV vca fx"], [3, "- bvbus"], [3, "- Back up bu"], [0, "- BASS"], [1, "- bassbus"], [2, "- lobass"], [2, "- hibass"], [2, "- ampbass"], [2, "- syhbass"], [0, "- otheronly"], [1, "- GUITAR"], [2, "- egtrbus"], [2, "- agtrbus"], [2, "- dgtrbus"], [1, "- KEYBOAED"], [2, "- key lo bus"], [2, "- key hi bus"], [2, "- painobus"], [1, "- SYNTH"], [2, "- sfxbus"], [2, "- loopbus"], [0, "- DRUM"], [1, "- drumsbus"], [2, "- kickbus"], [2, "- snarebus"], [2, "- tombus"], [2, "- otherbus"]];

@customElement("app-root")
class AppRoot extends LitElement {
  static styles = [baseStyles, css`
    :host { display: block; position: relative; min-height: 100vh; overflow: hidden; background: #454545; font: 12px/16px "Open Sans", "Noto Sans CJK SC", sans-serif; }
    .menu { display: flex; align-items: center; height: 19px; padding: 0 7px; background: #f0f0f0; color: #111; gap: 16px; line-height: 14px; }
    .menu .file { margin-left: 5px; } .menu .audio { margin-left: auto; font-size: 13px; }
    .bar { display: flex; height: 84px; background: linear-gradient(#b9babc, #9c9ea1); border-top: 2px solid #777; overflow: hidden; }
    .sec { display: flex; flex-direction: column; padding: 12px 8px 0 6px; border-right: 1px solid #808286; box-shadow: 1px 0 #c4c5c8; }
    .sec.capped { padding: 0 8px 0 9px; }
    .cap { flex: none; height: 10px; border: 1px solid #8b8d90; border-top: 0; border-radius: 0 0 4px 4px; }
    .cap.end { border: 1px solid #8b8d90; border-radius: 4px 4px 0 0; }
    .capped .lcd { margin: 8px 0 9px; }
    .lcd { flex: none; background: linear-gradient(#1b2a10, #071004 60%, #0d1a08); border: 4px solid #0b0b0b; border-radius: 4px; color: #a4e61e; font-weight: 600; box-shadow: 0 0 0 1px #444; }
    .modes { width: 111px; height: 46px; display: grid; grid-template: 1fr 1fr / 1fr 1fr; padding: 4px 3px; gap: 1px; font: 700 10px/12px "Liberation Sans", Arial, sans-serif; }
    .modes button { border: 1px solid #3c5c12; background: #1c3208; color: #6c9a20; }
    .modes .sel { background: #1b87dd; color: #07294a; border-color: #1b87dd; }
    .tools { display: flex; border: 1px solid #7b7d80; border-radius: 3px; width: fit-content; }
    .cell { width: 37px; height: 29px; background: linear-gradient(#d6d7d9, #98999b); border-right: 1px solid #7b7d80; flex-direction: column; }
    .cell .icon { width: 20px; height: 20px; }
    .cell.caret .icon { margin-bottom: 1px; }
    .cell.caret::after { content: ""; border: 3px solid transparent; border-top-color: #222; border-bottom: 0; }
    .cell.thin { width: 13px; } .cell.mid { width: 31px; }
    .cell.thin .icon { width: 9px; height: 10px; }
    .num { width: 18px; height: 18px; background: linear-gradient(#d0d1d3, #98999b); border-right: 1px solid #85878a; font: 700 11px/18px "Liberation Sans", Arial, sans-serif; color: #222; }
    .two { margin-top: 12px; }
    .btn { width: 31px; height: 20px; border: 1px solid #77797c; border-radius: 3px; background: linear-gradient(#c9cacc, #97989a); }
    .btn .icon { width: 14px; height: 14px; }
    .btn.blue, .cell.blue { background: linear-gradient(#3f7fc4, #2a5d9d); }
    .editing .top { padding-left: 18px; align-items: center; gap: 5px; }
    .smart { border: solid #d4d5d7; border-width: 5px 4px 0; margin: -7px 2px 0; border-radius: 3px 3px 0 0; }
    .bin { display: flex; align-items: flex-end; }
    .rule { border-top: 1px solid #808286; margin: 4px 0 5px; box-shadow: 0 1px #c0c1c3; }
    .keys { display: flex; gap: 5px; }
    .keys .gap { width: 20px; border-right: 1px solid #8a8c8f; margin-right: 6px; }
    .count { padding-right: 9px; }
    .counter { width: 317px; height: 69px; display: grid; grid-template: 44px 1fr / 178px 1fr; padding: 1px 3px; margin-top: -5px; }
    .pos { display: grid; place-items: center; border-right: 1px solid #4d7412; font-size: 11px; padding: 8px 0 0 0; }
    .times { display: grid; grid-template-columns: 40px 60px; text-align: right; font-size: 11px; line-height: 13px; }
    .times span { color: #eee; font-weight: 400; }
    .lower { grid-column: 1 / 3; border-top: 1px solid #4d7412; display: flex; align-items: center; color: #a4e61e; padding-left: 5px; }
    .lower .tempo { margin: 0 8px 0 72px; } .lower .sig { margin: 0 10px 0 36px; }
    .lower .icon { height: 16px; width: 16px; }
    .lower i { font: 700 9px/10px "Liberation Sans", sans-serif; width: 12px; height: 12px; border: 1px solid #42661a; color: #42661a; text-align: center; margin-right: 2px; }
    .lower i.hot { border-color: #a4e61e; color: #a4e61e; width: 16px; } .lower i.solid { background: #a4e61e; width: 10px; border-top-left-radius: 4px; }
    .white { color: #fff; }
    .rate.capped { padding: 0 9px; }
    .grid { width: 147px; height: 46px; padding: 2px 4px; font-size: 11px; line-height: 14px; }
    .grid .row { justify-content: space-between; height: 17px; align-items: center; padding-right: 20px; }
    .grid .row + .row { border-top: 1px solid #4d7412; color: #eee; font-weight: 400; padding-right: 10px; }
    .grid .row span:nth-child(2) { font-size: 12px; font-weight: 700; }
    .grid button { width: 36px; height: 12px; background: #93d80e; color: #0e2000; border-radius: 2px; font-size: 10px; }
    .slide { width: 66px; height: 12px; appearance: none; }
    .slide::-webkit-slider-runnable-track { height: 1px; background: #4d7412; }
    .slide::-webkit-slider-thumb { appearance: none; width: 20px; height: 10px; margin-top: -5px; border: 1px solid #777; background: linear-gradient(90deg, #888, #eee 45%, #333 50%, #ddd 55%, #888); }
    .transport { padding: 12px 7px 0 10px; }
    .transport .row { gap: 4px; }
    .transport .cell { width: 31px; height: 31px; border: 1px solid #77797c; border-radius: 2px; }
    .transport .cell.go { background: radial-gradient(#a8d848, #6ba818); }
    .transport .keys { gap: 4px; }
    .leds { display: flex; flex-direction: column; gap: 3px; padding: 4px 0 0 2px; }
    .leds b { width: 12px; height: 12px; border: 1px solid #555; background: linear-gradient(#ddd, #888); } .leds .g { background: #4fe010; }
    .links { padding: 7px 5px 0 8px; }
    .views { width: 142px; height: 46px; display: grid; grid-template-columns: 66px 1fr; padding: 1px 4px; font-size: 11px; line-height: 12px; align-items: center; }
    .views button { color: inherit; font-size: 10px; height: 11px; justify-content: flex-start; padding-left: 20px; }
    .views .white { color: #fff; font-weight: 400; font-size: 11px; }
    .views button.lit { font-size: 11px; font-weight: 600; padding-left: 16px; }
    .views .offb { background: #22400a; border: 1px solid #4d7412; color: #7eb41a; width: 53px; margin-left: 4px; padding: 0; justify-content: center; }
    .links .keys { margin-top: 5px; gap: 4px; }
    .last { flex: 1; flex-direction: row; align-items: flex-end; border: 0; box-shadow: none; padding: 0 6px 4px 10px; gap: 4px; }
    .last .mtc { font: 700 10px/12px "Liberation Sans", sans-serif; color: #555; }
    .circ { width: 17px; height: 17px; border: 1px solid #555; border-radius: 50%; margin: 0 0 53px auto; background: #b5b5b5; }
    .circ::before { content: ""; border: 5px solid transparent; border-top-color: #222; border-bottom: 0; }
    .shade { height: 5px; background: #33363a; }
    .work { display: flex; min-height: 972px; }
    aside { flex: none; width: 138px; display: flex; flex-direction: column; background: #414141; }
    .perf { height: 180px; background: #a8a8a8; padding: 6px 0 0 5px; color: #111; overflow: hidden; line-height: 13px; white-space: nowrap; font-family: "Open Sans", "Noto Sans CJK SC", sans-serif; }
    .perf svg { display: block; width: 130px; height: 35px; margin-bottom: 8px; }
    .perf svg text { font: 9px "Noto Sans", "Noto Sans CJK SC", sans-serif; fill: #333; }
    .perf p { margin: 0 0 13px; font-size: 11px; }
    .nav { margin-top: 12px; background: #333; flex: 1; padding: 0 14px 0 10px; color: #d4d4d4; display: flex; flex-direction: column; font-family: Lato, "Open Sans", sans-serif; }
    .tabs { display: flex; gap: 9px; height: 20px; padding-left: 3px; }
    .tabs button { font-size: 12px; height: 20px; }
    .tabs button + button { padding-top: 2px; }
    .find { display: flex; margin-top: 2px; gap: 6px; }
    .find button { width: 24px; height: 15px; border: 1px solid #222; border-radius: 3px; background: #666; font-size: 11px; }
    .find input { width: 43px; height: 16px; border: 1px solid #666; margin-left: 9px; }
    .tree { margin-top: 2px; border: 1px solid #6a6a6a; height: 719px; padding: 4px 0 0 3px; font-size: 15px; line-height: 20px; overflow: hidden; white-space: nowrap; }
    .tree li { padding-left: calc(var(--depth) * 8px); }
    .up { margin: 1px -2px 0; height: 10px; background: #4a4a4a; border-radius: 4px; font-size: 9px; }
    main { flex: 1; min-width: 0; display: flex; flex-direction: column; }
    .strip { display: flex; height: 43px; align-items: flex-start; }
    .strip .tools { margin: 6px 12px 0 11px; border-color: #333; }
    .strip .cell { width: 30px; height: 28px; }
    .strip .cell .icon { width: 18px; height: 18px; }
    .over { flex: 1; height: 42px; background: #b2b2b2; min-width: 0; }
    .lower-work { display: flex; flex: 1; min-width: 0; }
    .list { flex: none; width: 160px; padding: 4px 7px 0 8px; display: flex; flex-direction: column; }
    .heads { height: 65px; margin-top: 1px; color: #b8b8b8; font: 700 10px/11px "Open Sans", sans-serif; }
    .heads div { display: flex; justify-content: space-between; border-bottom: 1px solid #303030; padding: 0 3px 0 9px; height: 12px; }
    .heads i { width: 20px; font-style: normal; font-size: 8px; color: #999; }
    .heads b { margin-right: auto; }
    .heads div:last-child { padding-top: 9px; border: 0; }
    .rows { height: 841px; overflow: hidden; border-bottom: 1px solid #888; width: 145px; background: #3e3e3e; }
    .rows track-row:first-child { margin-top: -2px; }
    .vocal { color: #aaa; font: 10px/17px "Liberation Sans", sans-serif; margin-left: -1px; }
    .mixer { flex: 1; min-width: 0; display: flex; flex-direction: column; padding-top: 8px; }
    .desk { display: flex; min-width: 0; height: 906px; }
    .desk master-strip { height: 903px; }
    .chans { flex: 1; min-width: 0; display: flex; flex-direction: column; }
    .channels { display: flex; overflow: hidden; height: 890px; }
    .channels .plain { width: 78px; } .channels .folder { width: 83px; }
    .scroll { display: flex; height: 16px; background: #b0b0b0; }
    .scroll button { width: 17px; height: 16px; background: linear-gradient(#888, #555); color: #fff; font-size: 8px; }
    .thumb { flex: 1; display: flex; }
    .thumb span { margin-left: 36%; width: 32%; background: #888; height: 14px; border: 1px solid #666; }
    .dock { flex: 1; background: #777; padding: 1px 0 0 3px; display: flex; gap: 6px; color: #eee; font-size: 10px; }
    .dock button { height: 13px; width: 62px; background: #eee; color: #000; font: 700 10px/12px "Noto Sans CJK SC", sans-serif; gap: 4px; }
    .plugin { position: absolute; left: 390px; top: 245px; right: 170px; }
  `];
  cell(name: string, cls = "caret") { return html`<button class="cell ${cls}" aria-label=${name}>${icon(name)}</button>`; }
  key(name: string, cls = "") { return html`<button class="btn ${cls}" aria-label=${name}>${icon(name)}</button>`; }
  renderBar() {
    return html`<div class="bar">
      <div class="sec capped"><div class="cap"></div><div class="lcd modes"><button>SHUFFLE</button><button>SPOT</button><button>SLIP</button><button class="sel">GRID ▾</button></div><div class="cap end"></div></div>
      <div class="sec"><div class="tools">${this.cell("left", "thin")}${this.cell("waveform", "mid caret")}${this.cell("tracks", "mid caret")}${this.cell("right", "thin")}</div>
        <div class="tools two">${[1, 2, 3, 4, 5].map((n) => html`<button class="num">${n}</button>`)}</div></div>
      <div class="sec editing">
        <div class="row top">${this.key("move")}<div class="bin"><div class="tools">${this.cell("zoom")}</div><div class="smart"><div class="tools">${this.cell("trim")}${this.cell("wave", "")}${this.cell("hand")}</div></div><div class="tools">${this.cell("speaker", "")}${this.cell("pencil")}</div></div></div>
        <div class="rule"></div>
        <div class="keys">${["nudge", "updown", "lines", "tabto"].map((n) => this.key(n))}<span class="gap"></span>${this.key("envelope", "blue")}${["marker", "boxes", "loop"].map((n) => this.key(n))}</div></div>
      <div class="sec count"><div class="lcd counter">
        <div class="pos">13.2.50/0:21.215</div>
        <div class="times"><span>Start</span><b>1.1.00</b><span>End</span><b>1.1.00</b><span>Length</span><b>0.0.00</b></div>
        <div class="lower"><span class="white">♩=</span><b class="tempo">140</b><span>|</span>${icon("waveLight")}<b class="sig">4/4</b><span>|&ensp;</span><i class="hot">⫴</i><i class="solid"></i><i>◉</i><i>✳</i><i>S</i><i>M</i></div></div></div>
      <div class="sec capped rate"><div class="cap"></div><div class="lcd grid"><div class="row"><button>Grid</button><span>速率:</span><span>1.0</span></div><div class="row"><label for="nudge">Nudge</label><input class="slide" id="nudge" type="range"></div></div><div class="cap end"></div></div>
      <div class="sec transport"><div class="row">${this.cell("pause", "")}${this.cell("stop", "")}${this.cell("play", "go")}${this.cell("record", "")}<div class="leds"><b></b><b class="g"></b></div></div>
        <div class="rule"></div><div class="keys">${["start", "rewind", "forward", "end"].map((n) => this.key(n))}</div></div>
      <div class="sec links"><div class="lcd views"><button class="offb">OFF</button><button class="lit">Mixer</button><button class="white">Meter</button><button class="lit">Video</button><button class="white">Tempo</button><button class="lit">Matrix</button></div>
        <div class="keys">${["midi", "metro", "merge", "wheat"].map((n) => this.key(n))}</div></div>
      <div class="sec last">${this.key("clock")}<button class="btn mtc">MTC</button><button class="circ" aria-label="Toolbar menu"></button></div>
    </div>`;
  }
  render() {
    return html`
      <nav class="menu">${["文件(F)", "编辑(E)", "视图(V)", "插入(I)", "对象(M)", "轨道(T)", "选项(O)", "操作(A)", "扩展(X)", "帮助(H)"].map((m) => html`<button>${m}</button>`)}
        <span class="file">[编辑FX参数:轨道8 BV 2_01:...]</span><span class="audio">[44.1kHz 24bit WAV : 2/2ch 2048spls ~88/100ms ASIO]</span></nav>
      ${this.renderBar()}
      <div class="shade"></div>
      <div class="work">
        <aside>
          <div class="perf"><svg viewBox="0 0 130 35" aria-hidden="true"><rect width="14" height="35" fill="#12898f"/><rect width="27" height="7" fill="#1c5054"/><rect x="15" y="5" width="12" height="30" fill="#12898f"/><rect x="27" y=".5" width="102" height="34" fill="none" stroke="#555"/>
            <path d="M27 17h102" stroke="#333"/><path d="M31 34l1-14 3 1 2-3 2 2 3-2 2 3 3-2 3 1 2-2 3 3 3-2 3 2 3-3 3 2 3-2 3 2 2-1 2 1 2 11 5 3 5-4 2-10 2 9 3-10 1-8 4 2 5-3 4 2 4-5 2 12 2-9 3-3 2 22 6 0V10h5" fill="none" stroke="#111"/><path d="M27 34h80l2-10 1 10 2-22 2 20 2-30 2 32h8l2-32" fill="none" stroke="#5aa014"/>
            <text x="29" y="9">cur/avg:78%/40%</text><text x="111" y="9">示图</text></svg>
            <p>CPU:78%<br>RT CPU: 88.6%<br>RT L/B: 8539.86ms/46.44m</p><p>磁盘读取:4.14MB/s<br>磁盘写入:0B/s</p><p>RAM使用: 2622MB<br>Sys使用: 3771MB/3994MB</p></div>
          <div class="nav"><div class="tabs"><button>Navigator</button><button>Settings</button></div>
            <div class="find"><button>&gt;&gt;</button><button>&lt;&lt;</button><input aria-label="Filter"></div>
            <ul class="tree">${outline.map(([d, n]) => html`<li style=${styleMap({ "--depth": String(d) })}>${n}</li>`)}</ul>
            <button class="up">^</button></div>
        </aside>
        <main>
          <div class="strip"><div class="tools">${this.cell("zoom", "blue caret")}${this.cell("pencil")}${this.cell("trim")}${this.cell("wave", "")}${this.cell("speaker", "")}${this.cell("hand")}</div>
            <svg class="over" viewBox="342 0 1578 42" preserveAspectRatio="none" shape-rendering="crispEdges" role="img" aria-label="Project overview">
              ${overview.map(([c, y, h, spans]) => spans.map(([a, b]) => svg`<rect x=${a} y=${y} width=${b - a} height=${h} fill=${c}/>`))}
              ${cursors.map(([x, c]) => svg`<rect x=${x} y="0" width="1" height="42" fill=${c}/>`)}</svg></div>
          <div class="lower-work">
            <div class="list"><div class="heads">${["Regions", "Markers", "Tempo", "Timebase"].map((h) => html`<div><i>${h === "Tempo" ? "▶" : ""}</i><b>${h}</b><span>+</span></div>`)}</div>
              <div class="rows">${tracks.map((k) => html`<track-row .track=${k}></track-row>`)}</div><div class="vocal">VOCAL</div></div>
            <div class="mixer"><div class="desk"><master-strip></master-strip>
              <div class="chans"><div class="channels">${strips.map((c) => html`<channel-strip class=${c.kind} .strip=${c}></channel-strip>`)}</div>
                <div class="scroll"><button aria-label="Scroll left">◀</button><div class="thumb"><span></span></div><button aria-label="Scroll right">▶</button></div></div></div>
              <div class="dock"><span>!</span><button><span>☒</span>调音台</button></div></div>
          </div>
        </main>
      </div>
      <compressor-window class="plugin"></compressor-window>`;
  }
}
